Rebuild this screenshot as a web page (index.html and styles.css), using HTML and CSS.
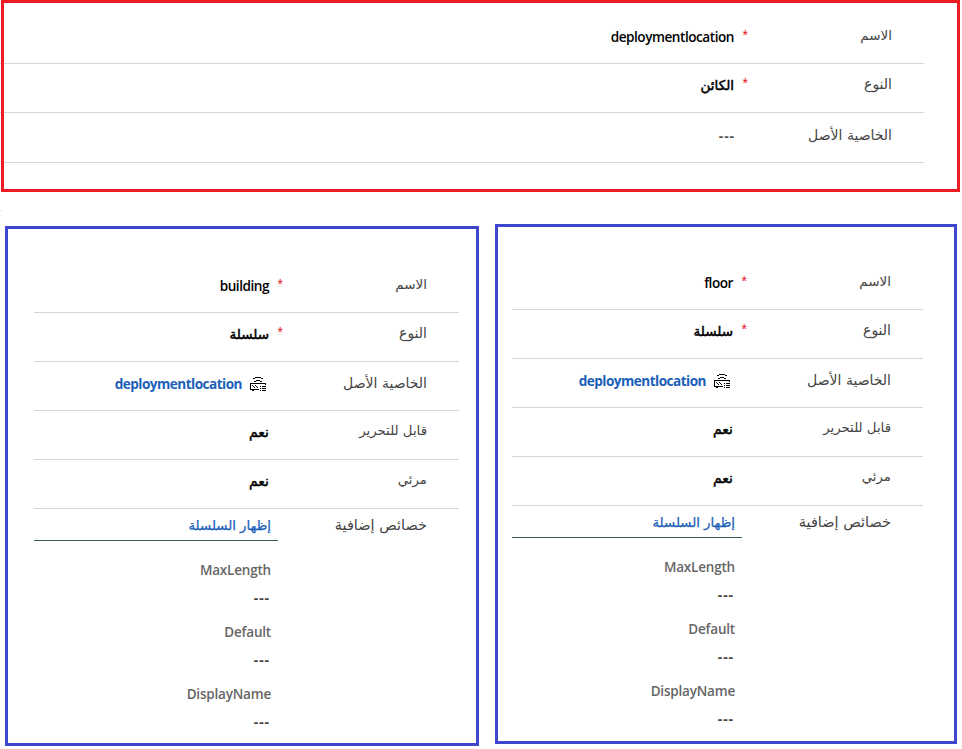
FILE: index.html
```html
<!DOCTYPE html>
<html lang="ar" dir="rtl">
<head>
<meta charset="utf-8">
<title>deploymentlocation</title>
<link rel="stylesheet" href="styles.css">
</head>
<body>
<svg class="defs" aria-hidden="true"><symbol id="device" viewBox="0 0 16 14"><path d="M5 .5h6M3 1.5h2M11 1.5h2M6 3.5h4M4 4.5h2M10 4.5h2M0 6.5h16M.5 6v7M0 12.5h9M15.5 6v2M10 9.5h1M12 9.5h4M10 11.5h1M12 11.5h4M10 13.5h1M12 13.5h4M2 13.5h2M2 8.5h1M3 9.5h1M4 10.5h1M5 8.5h1M6 9.5h1M7 10.5h1" fill="none" stroke="#000" stroke-width="1"/></symbol></svg>
<main class="page">
  <section class="panel panel-parent">
    <div class="row name"><span class="label">الاسم</span><span class="star">*</span><span class="value latin">deploymentlocation</span></div>
    <div class="row type"><span class="label">النوع</span><span class="star">*</span><span class="value">الكائن</span></div>
    <div class="row tall"><span class="label">الخاصية الأصل</span><span class="star"></span><span class="value dash">---</span></div>
  </section>
  <div class="children">
    <section class="panel panel-floor">
      <div class="row name"><span class="label">الاسم</span><span class="star">*</span><span class="value latin">floor</span></div>
      <div class="row type"><span class="label">النوع</span><span class="star">*</span><span class="value">سلسلة</span></div>
      <div class="row parent"><span class="label">الخاصية الأصل</span><span class="star"></span><span class="value ref"><svg class="icon"><use href="#device"/></svg><a class="reflink">deploymentlocation</a></span></div>
      <div class="row flag"><span class="label">قابل للتحرير</span><span class="star"></span><span class="value">نعم</span></div>
      <div class="row flag"><span class="label">مرئي</span><span class="star"></span><span class="value">نعم</span></div>
      <div class="extra">
        <span class="label">خصائص إضافية</span>
        <div class="schema">
          <a class="schema-title">إظهار السلسلة</a>
          <dl class="props"><dt>MaxLength</dt><dd>---</dd><dt>Default</dt><dd>---</dd><dt>DisplayName</dt><dd>---</dd></dl>
        </div>
      </div>
    </section>
    <section class="panel panel-building">
      <div class="row name"><span class="label">الاسم</span><span class="star">*</span><span class="value latin">building</span></div>
      <div class="row type"><span class="label">النوع</span><span class="star">*</span><span class="value">سلسلة</span></div>
      <div class="row parent"><span class="label">الخاصية الأصل</span><span class="star"></span><span class="value ref"><svg class="icon"><use href="#device"/></svg><a class="reflink">deploymentlocation</a></span></div>
      <div class="row flag"><span class="label">قابل للتحرير</span><span class="star"></span><span class="value">نعم</span></div>
      <div class="row flag"><span class="label">مرئي</span><span class="star"></span><span class="value">نعم</span></div>
      <div class="extra">
        <span class="label">خصائص إضافية</span>
        <div class="schema">
          <a class="schema-title">إظهار السلسلة</a>
          <dl class="props"><dt>MaxLength</dt><dd>---</dd><dt>Default</dt><dd>---</dd><dt>DisplayName</dt><dd>---</dd></dl>
        </div>
      </div>
    </section>
  </div>
</main>
</body>
</html>
```
FILE: styles.css
```css
* { box-sizing: border-box; }
body { margin: 0; background: #fff; font-family: "Open Sans", "DejaVu Sans", sans-serif; font-size: 14px; color: #000; }
.defs { position: absolute; width: 0; height: 0; }
.page { position: relative; width: 962px; height: 749px; overflow: hidden; }
/* continuation of the grid lines past the panel edge */
.page::before { content: ""; position: absolute; left: 0; top: 63px; width: 1px; height: 148px; background: repeating-linear-gradient(#d6d6d6 0 1px, transparent 1px 49px); }
.panel { border: 3px solid #3f48cc; }
.panel-parent { width: 959px; height: 192px; margin-right: 2px; padding: 12px 33px 0 0; border-color: #ed1c24; }
.children { display: flex; align-items: flex-start; justify-content: space-between; margin-top: 32px; padding: 0 5px; }
.panel-floor { width: 462px; height: 520px; padding: 34px 31px 0 14px; }
.panel-building { width: 474px; height: 520px; margin-top: 2px; padding: 35px 17px 0 26px; }
.row { display: grid; grid-template-columns: 144px 14px 1fr; align-items: end; height: 49px; padding-right: 32px; border-bottom: 1px solid #d6d6d6; white-space: nowrap; }
.row.tall { height: 50px; }
.label { font-family: "DejaVu Sans", sans-serif; font-size: 14px; line-height: 20px; color: #444; margin-bottom: 17px; }
.name .label { font-size: 13.5px; margin-bottom: 18px; }
.type .label { margin-bottom: 18px; }
.flag .label { font-size: 13.3px; margin-bottom: 18px; }
.star { font-family: "Liberation Sans", sans-serif; font-size: 14px; color: #e81123; line-height: 20px; margin-bottom: 18px; }
.type .star { margin-bottom: 19px; }
.value { font-family: "DejaVu Sans", sans-serif; font-size: 13.5px; line-height: 20px; margin-bottom: 17px; -webkit-text-stroke: .5px currentColor; }
.flag .value { font-size: 14px; }
.latin, .ref, .dash { font-family: "Open Sans", sans-serif; font-size: 13.6px; font-weight: 600; letter-spacing: -.47px; margin-bottom: 16px; -webkit-text-stroke: 0; }
.dash { font-weight: 700; color: #555; font-size: 14px; letter-spacing: .9px; margin-right: -1px; }
.ref { display: flex; align-items: center; gap: 8px; padding-right: 3px; }
.icon { width: 16px; height: 14px; shape-rendering: crispEdges; }
.reflink, .schema-title { color: #1b5fb8; }
.reflink { font-weight: 700; letter-spacing: -.53px; }
.extra { display: flex; padding-right: 32px; }
.extra .label { width: 149px; margin: 6px 0 0; font-size: 14.5px; }
.schema { flex: 1; }
.schema-title { display: block; height: 32px; padding: 7px 7px 0 0; border-bottom: 1px solid #3a5a50; font-family: "DejaVu Sans", sans-serif; font-size: 13.3px; line-height: 20px; -webkit-text-stroke: .25px currentColor; }
.props { margin: 19px 7px 0 0; font-size: 13.5px; font-weight: 600; color: #666; letter-spacing: -.2px; }
.props dt { height: 28px; line-height: 20px; }
.props dd { height: 34px; margin: 0 1px 0 0; font-size: 14px; font-weight: 700; line-height: 20px; color: #444; letter-spacing: .9px; }
```
